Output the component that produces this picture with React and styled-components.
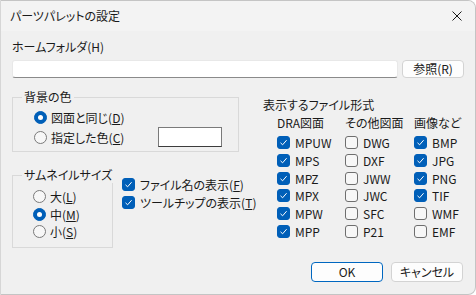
import React from 'react';
import styled, { createGlobalStyle } from 'styled-components';

const GlobalStyle = createGlobalStyle`
  body {
    margin: 0;
    background: #ffffff;
    font-family: "Noto Sans CJK JP", "Noto Sans", sans-serif;
    font-size: 12px;
    color: #1a1a1a;
    font-feature-settings: "palt";
  }
`

const Window = styled.div`
  width: 476px;
  height: 295px;
  box-sizing: border-box;
  display: flex;
  flex-direction: column;
  background: #f0f0f0;
  border: 1px solid #c4c4c4;
  border-left-color: #d6d6d6;
  border-radius: 0 8px 8px 0;
  overflow: hidden;
`
const TitleBar = styled.div`
  height: 30px;
  flex: none;
  display: flex;
  align-items: center;
  justify-content: space-between;
  padding: 0 13px 0 9px;
  background: #f3f3f3;
`
const Title = styled.span`
  line-height: 16px;
`
const Body = styled.div`
  flex: 1;
  display: flex;
  flex-direction: column;
  padding: 8px 11px 12px 11px;
`
const Label = styled.div`
  line-height: 16px;
`
const InputRow = styled.div`
  display: flex;
  gap: 4px;
  margin-top: 5px;
`
const TextInput = styled.div`
  flex: 1;
  height: 18px;
  box-sizing: border-box;
  background: #ffffff;
  border: 1px solid #e8e8e8;
  border-bottom-color: #8a8a8a;
  border-radius: 3px;
`
const Button = styled.div`
  width: ${(props) => props.w || 72}px;
  height: ${(props) => props.h || 20}px;
  box-sizing: border-box;
  display: flex;
  align-items: center;
  justify-content: center;
  background: #fdfdfd;
  border: 1px solid ${(props) => props.primary ? '#0067c0' : '#d3d3d3'};
  border-radius: 4px;
  line-height: 16px;
`
const Main = styled.div`
  display: flex;
`
const LeftCol = styled.div`
  width: 227px;
  flex: none;
  display: flex;
  flex-direction: column;
`
const Group = styled.fieldset`
  margin: ${(props) => props.top}px 0 0 0;
  padding: 0;
  min-width: 0;
  flex: none;
  width: ${(props) => props.w}px;
  box-sizing: border-box;
  border: 1px solid #d9d9d9;
  border-radius: 0;
`
const Legend = styled.legend`
  margin-left: 9px;
  padding: 0 2px;
  line-height: 16px;
  white-space: nowrap;
`
const GroupInner = styled.div`
  padding: ${(props) => props.pad};
  display: flex;
  flex-direction: column;
`
const OptionRow = styled.div`
  height: ${(props) => props.h}px;
  display: flex;
  align-items: center;
  gap: 4px;
`
const Radio = styled.span`
  width: 13px;
  height: 13px;
  box-sizing: border-box;
  border-radius: 50%;
  flex: none;
  display: flex;
  align-items: center;
  justify-content: center;
  background: ${(props) => props.on ? '#005fb8' : '#f7f7f7'};
  border: 1px solid ${(props) => props.on ? '#005fb8' : '#7a7a7a'};
  &::after {
    content: '';
    display: ${(props) => props.on ? 'block' : 'none'};
    width: 5px;
    height: 5px;
    border-radius: 50%;
    background: #ffffff;
  }
`
const ColorButton = styled.div`
  margin-left: auto;
  width: 64px;
  height: 20px;
  box-sizing: border-box;
  background: #ffffff;
  border: 1px solid #7a7a7a;
  border-bottom-color: #3c3c3c;
`
const SubRow = styled.div`
  display: flex;
`
const CheckList = styled.div`
  margin: 23px 0 0 9px;
  display: flex;
  flex-direction: column;
`
const CheckRow = styled.div`
  height: ${(props) => props.h}px;
  display: flex;
  align-items: center;
  gap: 5px;
  white-space: nowrap;
`
const Box = styled.span`
  width: 13px;
  height: 13px;
  box-sizing: border-box;
  flex: none;
  border-radius: 3px;
  display: flex;
  align-items: center;
  justify-content: center;
  background: ${(props) => props.on ? '#005fb8' : '#f7f7f7'};
  border: 1px solid ${(props) => props.on ? '#005fb8' : '#6e6e6e'};
`
const RightCol = styled.div`
  margin-left: 24px;
  padding-top: 19px;
  display: flex;
  flex-direction: column;
`
const Formats = styled.div`
  margin-top: 2px;
  padding-left: 14px;
  display: grid;
  grid-template-columns: 68px 69px auto;
`
const Column = styled.div`
  display: flex;
  flex-direction: column;
`
const ColHead = styled.div`
  line-height: 16px;
  margin-bottom: 3px;
`
const Footer = styled.div`
  margin-top: auto;
  display: flex;
  justify-content: flex-end;
  gap: 8px;
  padding-right: 1px;
`

const Check = ({ on }) => (
  <Box on={on}>
    {on && (
      <svg width="9" height="9" viewBox="0 0 9 9">
        <path d="M1.5 4.8 L3.6 6.8 L7.6 2.2" fill="none" stroke="#ffffff" strokeWidth="1" />
      </svg>
    )}
  </Box>
)

const CloseIcon = () => (
  <svg width="10" height="10" viewBox="0 0 10 10">
    <path d="M0.5 0.5 L9.5 9.5 M9.5 0.5 L0.5 9.5" stroke="#1a1a1a" strokeWidth="1" />
  </svg>
)

const columns = [
  { head: 'DRA図面', items: [['MPUW', true], ['MPS', true], ['MPZ', true], ['MPX', true], ['MPW', true], ['MPP', true]] },
  { head: 'その他図面', items: [['DWG', false], ['DXF', false], ['JWW', false], ['JWC', false], ['SFC', false], ['P21', false]] },
  { head: '画像など', items: [['BMP', true], ['JPG', true], ['PNG', true], ['TIF', true], ['WMF', false], ['EMF', false]] },
]

export default function App() {
  return (
    <>
      <GlobalStyle />
      <Window>
        <TitleBar>
          <Title>パーツパレットの設定</Title>
          <CloseIcon />
        </TitleBar>
        <Body>
          <Label>ホームフォルダ(H)</Label>
          <InputRow>
            <TextInput />
            <Button w={62} h={18}>参照(R)</Button>
          </InputRow>
          <Main>
            <LeftCol>
              <Group top={11} w={227}>
                <Legend>背景の色</Legend>
                <GroupInner pad="2px 16px 4px 21px">
                  <OptionRow h={20}>
                    <Radio on />
                    <span>図面と同じ(<u>D</u>)</span>
                  </OptionRow>
                  <OptionRow h={20}>
                    <Radio />
                    <span>指定した色(<u>C</u>)</span>
                    <ColorButton />
                  </OptionRow>
                </GroupInner>
              </Group>
              <SubRow>
                <Group top={15} w={101}>
                  <Legend>サムネイルサイズ</Legend>
                  <GroupInner pad="5px 0 6px 20px">
                    <OptionRow h={17.5}>
                      <Radio />
                      <span>大(<u>L</u>)</span>
                    </OptionRow>
                    <OptionRow h={17.5}>
                      <Radio on />
                      <span>中(<u>M</u>)</span>
                    </OptionRow>
                    <OptionRow h={17.5}>
                      <Radio />
                      <span>小(<u>S</u>)</span>
                    </OptionRow>
                  </GroupInner>
                </Group>
                <CheckList>
                  <CheckRow h={18}>
                    <Check on />
                    <span>ファイル名の表示(<u>F</u>)</span>
                  </CheckRow>
                  <CheckRow h={18}>
                    <Check on />
                    <span>ツールチップの表示(<u>T</u>)</span>
                  </CheckRow>
                </CheckList>
              </SubRow>
            </LeftCol>
            <RightCol>
              <Label>表示するファイル形式</Label>
              <Formats>
                {columns.map((col) => (
                  <Column key={col.head}>
                    <ColHead>{col.head}</ColHead>
                    {col.items.map(([name, on]) => (
                      <CheckRow key={name} h={17.7}>
                        <Check on={on} />
                        <span>{name}</span>
                      </CheckRow>
                    ))}
                  </Column>
                ))}
              </Formats>
            </RightCol>
          </Main>
          <Footer>
            <Button primary>OK</Button>
            <Button>キャンセル</Button>
          </Footer>
        </Body>
      </Window>
    </>
  );
}
